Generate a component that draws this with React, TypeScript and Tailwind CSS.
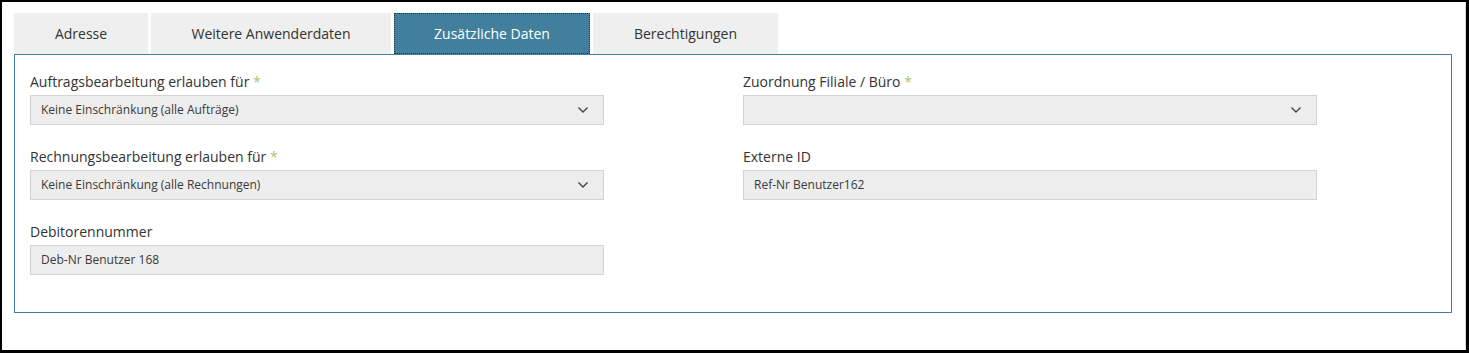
import React from "react";

const Chevron = () => (
  <svg width="12" height="8" viewBox="0 0 12 8" className="shrink-0">
    <path d="M1.5 1.5 L6 6 L10.5 1.5" fill="none" stroke="#444" strokeWidth="1.4" />
  </svg>
);

const Label = ({ text, req }: { text: string; req?: boolean }) => (
  <div className="h-5 leading-5 text-[14px] text-[#333] mb-[3px] whitespace-nowrap">
    {text}
    {req && <span className="text-[#a9c46f]"> *</span>}
  </div>
);

const Select = ({ value }: { value: string }) => (
  <div className="h-[30px] w-[574px] bg-[#ededed] border border-[#d3d3d3] flex items-center justify-between pl-[10px] pr-[14px] text-[12px] text-[#3a3a3a]">
    <span>{value}</span>
    <Chevron />
  </div>
);

const Input = ({ value }: { value: string }) => (
  <div className="h-[30px] w-[574px] bg-[#ededed] border border-[#d3d3d3] flex items-center pl-[10px] text-[12px] text-[#3a3a3a]">
    {value}
  </div>
);

const Field = ({ label, req, children }: { label: string; req?: boolean; children: React.ReactNode }) => (
  <div className="flex flex-col h-[75px]">
    <Label text={label} req={req} />
    {children}
  </div>
);

export default function App() {
  const tabs = [
    { t: "Adresse", w: "w-[134px]" },
    { t: "Weitere Anwenderdaten", w: "w-[240px]" },
    { t: "Zusätzliche Daten", w: "w-[196px]", active: true },
    { t: "Berechtigungen", w: "w-[185px]" },
  ];
  return (
    <div
      className="w-[1469px] h-[353px] bg-white border-l-2 border-t-2 border-r-[3px] border-b-[3px] border-black"
      style={{ fontFamily: '"Open Sans", sans-serif' }}
    >
      <div className="h-full border-r border-[#d9d9d9] pt-[11px] pl-[12px] pr-[13px]">
        <div className="flex gap-[3px] h-[41px]">
          {tabs.map((tab) => (
            <div
              key={tab.t}
              className={
                tab.active
                  ? `${tab.w} h-full bg-[#417f9c] text-white flex items-center justify-center text-[14px] outline outline-1 outline-dotted outline-[#333] -outline-offset-1`
                  : `${tab.w} h-full bg-[#efefef] text-[#333] flex items-center justify-center text-[14px]`
              }
            >
              {tab.t}
            </div>
          ))}
        </div>
        <div className="w-[1438px] border border-[#417f9c] pt-[17px] pb-[15px] pl-[15px]">
          <div className="grid grid-cols-[713px_574px]">
            <div className="flex flex-col">
              <Field label="Auftragsbearbeitung erlauben für" req>
                <Select value="Keine Einschränkung (alle Aufträge)" />
              </Field>
              <Field label="Rechnungsbearbeitung erlauben für" req>
                <Select value="Keine Einschränkung (alle Rechnungen)" />
              </Field>
              <Field label="Debitorennummer">
                <Input value="Deb-Nr Benutzer 168" />
              </Field>
            </div>
            <div className="flex flex-col">
              <Field label="Zuordnung Filiale / Büro" req>
                <Select value="" />
              </Field>
              <Field label="Externe ID">
                <Input value="Ref-Nr Benutzer162" />
              </Field>
            </div>
          </div>
        </div>
      </div>
    </div>
  );
}
